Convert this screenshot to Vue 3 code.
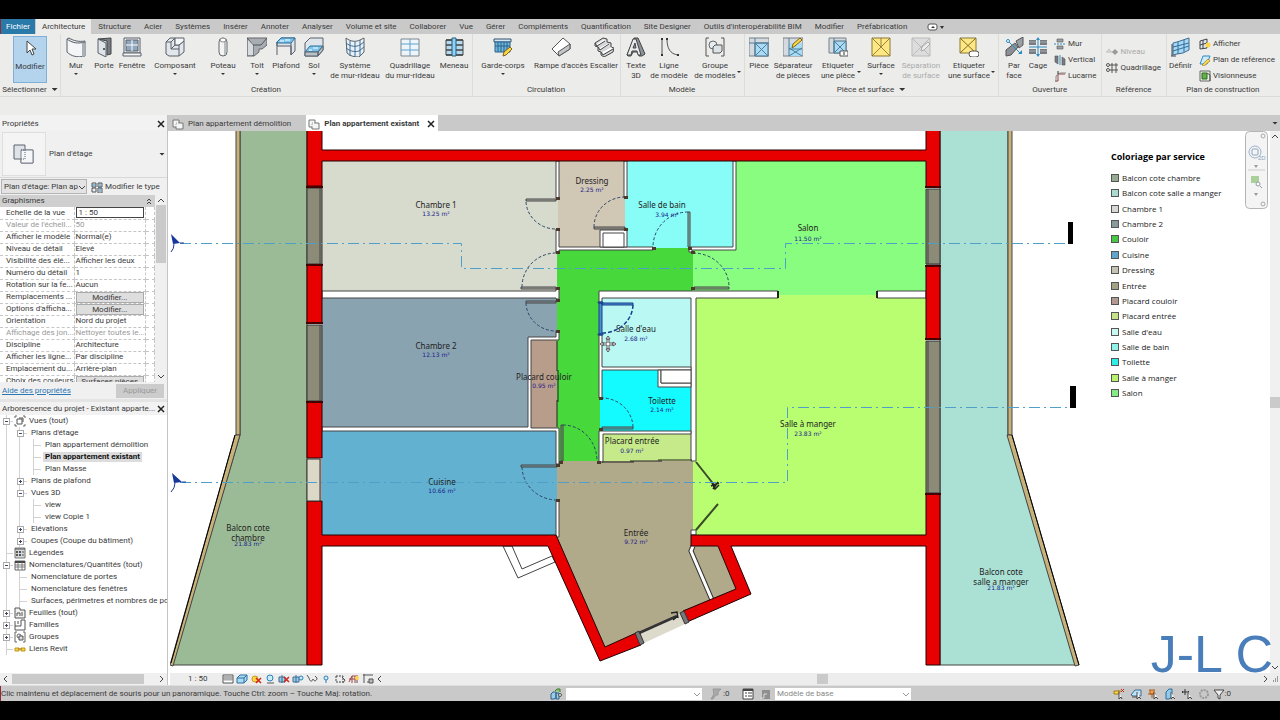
<script setup>
import { ref } from "vue";

// Glyphs of the ribbon, drawn on a 20x20 grid
const icons = {
  cursor:
    '<path d="M7 3v12l3-3 2 5 2-1-2-5h4z" fill="#fff" stroke="#444" stroke-width="1"/>',
  wall: '<path d="M1 2c5 4 11 5 18 3v14c-8 2-14 0-18-4z" fill="#f3f5f7" stroke="#59606a"/><path d="M1 2l2-1c5 3 10 4 16 3v1" fill="#d5d9dd" stroke="#59606a"/><path d="M16 6h3v13l-3 1z" fill="#a9b0b8"/>',
  door: '<path d="M4 2 17 1v16l-4 1V4z" fill="#777d86" stroke="#444"/><path d="M4 2l8 4v14l-8-4z" fill="#dfe4e8" stroke="#59606a"/><circle cx="10" cy="12" r="1" fill="#333"/>',
  window:
    '<path d="M2 1h16v15H2z" fill="#eef1f4" stroke="#59606a"/><path d="M4 3h12v11H4z" fill="#8fa6bd" stroke="#59606a"/><path d="M10 3v11M4 8h12" stroke="#fff"/><path d="M1 16h18v3H1z" fill="#f6f6f6" stroke="#59606a"/>',
  component:
    '<path d="M1 5 5 1h5v7h4l5-4v11l-5 4H4l-3-2z" fill="#e3e7eb" stroke="#59606a"/><path d="M10 1h9v3l-5 4h-4z" fill="#f6f7f8" stroke="#59606a"/><path d="M1 5h5v7h8v7M6 5l4-4M6 12l4-4M14 12V8" fill="none" stroke="#59606a"/>',
  column:
    '<rect x="6" y="1" width="8" height="18" rx="4" fill="#f4f4f4" stroke="#666"/><path d="M11 3v15h2V3z" fill="#b9bec4"/><ellipse cx="10" cy="3" rx="3" ry="2" fill="#fff" stroke="#888"/>',
  roof: '<path d="M0 1h20v7l-5 4h-3v3l-5 4H0z" fill="#a8adb3" stroke="#666"/><path d="M0 1l6 7h8l6-7M6 8v11" fill="none" stroke="#555"/><path d="M1 3l5 5v10H1z" fill="#d8dce0"/>',
  ceiling:
    '<path d="M1 5 5 1h14v13l-4 4V9H1z" fill="#dfe5ea" stroke="#59606a"/><path d="M1 5 5 1h14l-4 5H1z" fill="#7cc4ee" stroke="#2a6f9e"/><path d="M15 6v12M1 5v13" stroke="#59606a"/><path d="M4 4h4M9 3h5" stroke="#fff"/>',
  floor:
    '<path d="M1 15V6l5-5h13v12l-5 6H1z" fill="#dfe5ea" stroke="#59606a"/><path d="M1 15l5-6h13l-5 6z" fill="#7cc4ee" stroke="#2a6f9e"/><path d="M1 15h13v4H1zM14 15l5-6v4l-5 6z" fill="#b9c2ca" stroke="#59606a"/><path d="M5 13h3M9 11h5" stroke="#fff"/>',
  curtain:
    '<path d="M1 1c5 4 10 4 14 2l4-2v14l-5 5c-5 0-9-1-12-4z" fill="#e9f1f7" stroke="#59606a"/><path d="M1 6c5 4 10 4 14 2l4-3M1 11c5 4 10 4 13 3l5-4M5 4v15M10 5v15M15 3v16" fill="none" stroke="#3d6c93"/>',
  grid: '<path d="M1 2h18v17H1z" fill="#eef4f8" stroke="#7d8790"/><path d="M1 7h18M1 13h18M10 2v17" stroke="#5aa3cf"/>',
  mullion:
    '<path d="M2 3h17v15H2z" fill="#b5daef" stroke="#444"/><path d="M2 3h17M2 8h17M2 13h17M2 18h17" stroke="#444" stroke-width="1.500"/><path d="M8 1h4v18H8z" fill="#8fd0f5" stroke="#235c80"/>',
  railing:
    '<path d="M1 2h17v3H1z" fill="#cfe6f5" stroke="#35536d"/><path d="M2 5h15v10H2zM5 5v10M8 5v10M11 5v10M14 5v10M2 9h15" fill="#6eb5de" stroke="#2d6389"/><path d="M10 19l1-4 6-5 2 2-6 6z" fill="#ffd84a" stroke="#7d6512"/>',
  ramp: '<path d="M1 12 12 1l7 6v5L8 19z" fill="#fff" stroke="#555"/><path d="M8 19l-1-4L19 7v5z" fill="#c2c6ca" stroke="#555"/>',
  stairs:
    '<path d="M1 6l8-5 4 1v3l4 1v4l3 1-1 4-9 5-3-2v-3l-3-1v-4l-3-1z" fill="#d5d8db" stroke="#444"/><path d="M3 8l8-5M6 12l9-5M9 16l9-5" stroke="#fff" stroke-width="2"/><path d="M1 6l2 3 8-5M4 10l2 3 9-6M7 15l2 3 10-6" stroke="#444" fill="none"/>',
  text3d:
    '<path d="M1 18 8 1h4l7 16-3 2h-3l-1-4H7l-2 4H2z" fill="#8c9299" stroke="#444"/><path d="M1 18 7 2h3l5 16h-3l-1-4H6l-1 4zM7 11h3L9 6z" fill="#e8eaec" stroke="#444" fill-rule="evenodd"/>',
  line: '<path d="M3 2v16M8 2c0 9 3 15 11 16" fill="none" stroke="#555"/><path d="M2 1h2v2H2zM2 17h2v2H2zM7 1h2v2H7zM18 17h2v2h-2z" fill="#333"/>',
  group:
    '<path d="M4 1H1v18h3M16 1h3v18h-3" fill="none" stroke="#555"/><circle cx="8" cy="8" r="4" fill="#e8edf1" stroke="#666"/><path d="M8 10l2-2h7v6l-2 2H8z" fill="#dce3e9" stroke="#555"/>',
  room: '<path d="M0 1h20v18H0z" fill="#d6dadf" stroke="#75808a"/><path d="M6 6h13v13H6z" fill="#a9dcf4" stroke="#4f6f85"/><path d="M6 6l13 13M19 6 6 19M6 1v18M0 6h20" stroke="#4d7f9d"/>',
  roomsep:
    '<path d="M0 1h20v18H0z" fill="#d6dadf" stroke="#75808a"/><path d="M6 6h13v13H6z" fill="#a9dcf4"/><path d="M6 11l13 8M19 11 6 19M6 1v18M6 12h13" stroke="#4d7f9d"/><path d="M9 11l1-4 7-6 2 2-7 6z" fill="#ffd84a" stroke="#7d6512"/>',
  roomtag:
    '<path d="M1 1h17v15H1z" fill="#d6dadf" stroke="#75808a"/><path d="M6 4h12v12H6z" fill="#a9dcf4" stroke="#4f6f85"/><path d="M6 4l12 12M18 4 6 16M6 1v15" stroke="#4d7f9d"/><path d="M12 14h8v5h-8z" fill="#fff" stroke="#555"/><path d="M16 15v3" stroke="#333"/>',
  area: '<path d="M1 1h18v18H1z" fill="#ffe884" stroke="#8b7836"/><path d="M1 1l18 18M19 1 1 19M10 1v9" stroke="#7d6b2d" stroke-width=".8"/>',
  areasep:
    '<path d="M1 1h18v18H1z" fill="#ddd" stroke="#bbb"/><path d="M1 1l18 18M19 1 1 19" stroke="#bbb"/><path d="M10 14l1-4 6-5 2 2-6 6z" fill="#eee" stroke="#aaa"/>',
  areatag:
    '<path d="M1 1h16v15H1z" fill="#ffe884" stroke="#8b7836"/><path d="M1 1l16 15M17 1 1 16" stroke="#7d6b2d"/><rect x="10" y="14" width="10" height="6" rx="3" fill="#fff" stroke="#555"/>',
  byface:
    '<path d="M2 19v-6l9-7 3 4-7 8z" fill="#8b9096" stroke="#555"/><path d="M12 4l7-4v8l-4 3z" fill="#9aa0a6" stroke="#555"/><path d="M4 4l12 12" stroke="#2f8bc4"/><circle cx="4" cy="4" r="1.500" fill="#fff" stroke="#2f8bc4"/><path d="M14 17h4v-4z" fill="#2f8bc4"/>',
  shaft:
    '<path d="M1 3h7v5H1zM12 3h7v5h-7zM1 12h7v5H1zM12 12h7v5h-7z" fill="#777c82"/><path d="M1 5h7M1 14h7M12 5h7M12 14h7" stroke="#aaa"/><path d="M10 2v17M1 10h18" stroke="#2f8bc4"/><path d="M8 3l2-3 2 3zM8 17l2 3 2-3z" fill="#2f8bc4"/>',
  workplane:
    '<path d="M3 6l4-1 6-2 6-2v12l-6 3-6 1-4 1z" fill="#a9d8f4" stroke="#3d6c93"/><path d="M3 10l16-4M3 14l16-5M8 5v12M14 3v12" fill="none" stroke="#2f6f9c"/><path d="M1 19h5M2 7v12" stroke="#444"/>',
};

// 12x12 glyphs, shared by the ribbon stacks, the browser tree and the bottom bars
const smallIcons = {
  wallopen:
    '<path d="M3 1h6v3H3zM3 8h6v3H3z" fill="#9aa0a6" stroke="#555" stroke-width=".6"/><path d="M0 6h12" stroke="#2f8bc4" stroke-dasharray="2 1"/>',
  vertical:
    '<path d="M1 2h3v8L1 8zM8 3l3 2v6H8z" fill="#777c82" stroke="#555" stroke-width=".6"/><path d="M6 1v10" stroke="#2f8bc4"/>',
  dormer: '<path d="M1 11h3V4h7" fill="none" stroke="#a04545"/><path d="M2 12V6l4-3h6" fill="none" stroke="#888"/><path d="M4 1v3" stroke="#333"/>',
  level: '<path d="M0 6h12" stroke="#bbb"/><path d="M6 6l3-3 3 3-3 3z" fill="#999"/><path d="M1 6l2-3 2 3" fill="none" stroke="#bbb"/>',
  axes: '<path d="M4 3h8M4 8h8M6 1v10M10 1v10" stroke="#555"/><circle cx="2" cy="3" r="1.500" fill="none" stroke="#555"/><circle cx="2" cy="8" r="1.500" fill="none" stroke="#555"/>',
  show: '<path d="M1 3l7-2v9l-7 1z" fill="#dfe7ee" stroke="#444"/><path d="M1 7l7-2M4 2v9" stroke="#444"/><circle cx="9" cy="7" r="2.500" fill="#ffd84a"/>',
  refplane:
    '<path d="M1 10l3-8h7L8 10z" fill="#cde9fa" stroke="#2f8bc4"/><path d="M3 11l6-6 2 2-6 5z" fill="#ffd84a" stroke="#8d6d1a" stroke-width=".6"/>',
  viewer:
    '<path d="M1 1h10v10H1z" fill="#e7f2e2" stroke="#666"/><path d="M3 3h5v6H3z" fill="#64b04e" stroke="#2d6b1d"/><path d="M8 3l3 2v6" fill="none" stroke="#555"/>',
  views: '<path d="M3 1H1v2M9 1h2v2M1 9v2h2M11 9v2H9" fill="none" stroke="#666"/><path d="M3 4h5v5H3zM5 3h4v4" fill="none" stroke="#555"/>',
  legend: '<path d="M1 1h10v10H1z" fill="#d5d8db" stroke="#777"/><path d="M1 2h10" stroke="#555"/><path d="M3 4v6M6 4v6" stroke="#555" stroke-width="2" stroke-dasharray="2 1"/><path d="M8 5h2M8 8h2" stroke="#555"/>',
  schedule: '<path d="M1 2h10v9H1z" fill="#fff" stroke="#666"/><path d="M1 3h10" stroke="#444" stroke-width="2"/><path d="M1 6h10M1 8h10M4 3v8M8 3v8" stroke="#666" stroke-width=".8"/>',
  sheets: '<path d="M1 1h5v2h5v8H1z" fill="#f2f2f2" stroke="#555"/><path d="M3 9V6h3v3M8 5v4" fill="none" stroke="#555"/>',
  families: '<path d="M1 2v9h10V1H7v6H1M4 2v3" fill="none" stroke="#555"/>',
  groups: '<path d="M3 1H1v10h2M9 1h2v10H9" fill="none" stroke="#666"/><circle cx="5" cy="5" r="2" fill="none" stroke="#666"/><path d="M5 5h4v4H5z" fill="#ddd" stroke="#555"/>',
  link: '<path d="M1 5h4v3H1zM7 5h4v3H7z" fill="#f5d34b" stroke="#c2951a"/><path d="M4 6h4" stroke="#a27b12"/>',
  plan: '<path d="M1 2h6v3h4v6H4V9H1z" fill="#f4f5f6" stroke="#777"/><path d="M4 9V5h3" fill="none" stroke="#999" stroke-dasharray="1 1"/>',
  edittype: '<path d="M1 2h4v4H1zM7 2h4v4H7zM1 7h4v4H1zM7 7h4v5H7z" fill="#e7eef4" stroke="#555"/><path d="M1 4h4M9 2v9" stroke="#3d86b8"/>',
  detail: '<path d="M1 2h10v8H1z" fill="#fff" stroke="#555"/><path d="M1 4h10M1 6h10M3 3v5M5 3v5M7 3v5M9 3v5" stroke="#666" stroke-width=".6"/>',
  visual: '<path d="M1 5l3-3h7v5L8 10H1z" fill="#a9dcf4" stroke="#2a6f9e"/><path d="M1 5h7l3-3M8 5v5" fill="none" stroke="#2a6f9e"/>',
  sun: '<circle cx="5" cy="6" r="3" fill="#ffd84a" stroke="#c99a1b"/><path d="M6 5l5 5M11 5l-5 5" stroke="#d3261b" stroke-width="1.500"/>',
  shadow: '<circle cx="6" cy="5" r="3" fill="#c9ecfb" stroke="#2a7fb4"/><path d="M3 10h7" stroke="#555"/>',
  cropoff: '<path d="M1 4h6v5H1zM4 2v8" fill="#9ccbe8" stroke="#3d6c93"/><path d="M6 4l5 5M11 4l-5 5" stroke="#d3261b" stroke-width="1.500"/>',
  crop: '<path d="M1 4h6v5H1zM4 2v8" fill="#9ccbe8" stroke="#3d6c93"/><circle cx="9" cy="5" r="2" fill="#c9ecfb" stroke="#2a7fb4"/>',
  hide: '<path d="M1 2l2 3c1 4 3 4 4 1 1 3 4 2 4-1L9 3" fill="none" stroke="#555"/>',
  bulb: '<circle cx="6" cy="5" r="2" fill="#d5effc" stroke="#2a7fb4"/><path d="M6 7v3" stroke="#2a7fb4"/>',
  temp: '<path d="M2 3h7v6H2z" fill="none" stroke="#444" stroke-dasharray="2 1"/><path d="M8 4l3 3-2 3" fill="none" stroke="#555"/>',
  analytic: '<path d="M1 9l3-6h6M1 6h9M4 3v7M7 3v7" fill="none" stroke="#a04545"/><circle cx="9" cy="5" r="2" fill="#ffd84a"/><path d="M9 7v3" stroke="#555"/>',
  constraint: '<path d="M1 2h10M2 1v9M5 9h3" stroke="#555"/><path d="M7 6h4v4H7z" fill="#bbb" stroke="#555"/>',
  workset: '<path d="M1 6l2-2h3v6l-2 1H1zM6 5h3v6H6z" fill="#9ccbe8" stroke="#2d6389"/><path d="M5 3l2-2h3v3" fill="#7fc46e" stroke="#3c7b2d"/><circle cx="10" cy="7" r="1.500" fill="#eee" stroke="#555"/>',
  requests: '<path d="M3 1h8L8 4v3H6l-3 4H1l3-5z" fill="#aaa" stroke="#999"/>',
  options: '<path d="M1 1h10v10H1z" fill="#fff" stroke="#444"/><path d="M1 2h10" stroke="#444" stroke-width="2"/><path d="M3 5h2M3 8h2M6 5h4M6 8h4" stroke="#444"/>',
  mainmodel: '<path d="M3 2h8v9H3z" fill="#8f8f8f"/><path d="M1 10h4V6h3" fill="none" stroke="#ddd"/>',
  sellink: '<path d="M1 3h5v3H1zM5 3h3" fill="#ffd84a" stroke="#a27b12"/><path d="M8 1l3 3M11 1 8 4" stroke="#d3261b"/><path d="M6 4v7l2-2 1 2" fill="#fff" stroke="#444"/>',
  selunder: '<path d="M1 7l4-5h6v6H3z" fill="#bfe3f7" stroke="#3d6c93"/><path d="M2 9h8" stroke="#555"/><path d="M7 4v7l2-2 2 2" fill="#fff" stroke="#444"/>',
  selpin: '<path d="M2 2h6M3 2v4h4V2M1 6h8M5 6v4" fill="#f2a65a" stroke="#b35c17"/><path d="M7 4v7l2-2 2 2" fill="#fff" stroke="#444"/>',
  selface: '<path d="M2 4l3-3h3v8l-3 2H2z" fill="#8fc9ec" stroke="#2a6f9e"/><path d="M7 4v7l2-2 2 2" fill="#fff" stroke="#444"/>',
  drag: '<path d="M4 1v6M1 4h7M2 3 1 4l1 1M7 3l1 1" fill="none" stroke="#333"/><path d="M7 5v6l2-2 2 2" fill="#fff" stroke="#444"/>',
  process: '<circle cx="6" cy="6" r="4" fill="none" stroke="#999" stroke-width="2" stroke-dasharray="2 1"/>',
  filter: '<path d="M1 2h10L7 7v4l-2-1V7z" fill="#eee" stroke="#444"/>',
};

const menuTabs = [
  "Structure",
  "Acier",
  "Systèmes",
  "Insérer",
  "Annoter",
  "Analyser",
  "Volume et site",
  "Collaborer",
  "Vue",
  "Gérer",
  "Compléments",
  "Quantification",
  "Site Designer",
  "Outils d'interopérabilité BIM",
  "Modifier",
  "Préfabrication",
];

const panels = [
  {
    title: "Création",
    tools: [
      { icon: "wall", lines: ["Mur"], width: 28, menu: true },
      { icon: "door", lines: ["Porte"], width: 28 },
      { icon: "window", lines: ["Fenêtre"], width: 28 },
      { icon: "component", lines: ["Composant"], width: 58, menu: true },
      { icon: "column", lines: ["Poteau"], width: 38, menu: true },
      { icon: "roof", lines: ["Toit"], width: 30, menu: true },
      { icon: "ceiling", lines: ["Plafond"], width: 28 },
      { icon: "floor", lines: ["Sol"], width: 28, menu: true },
      { icon: "curtain", lines: ["Système", "de mur-rideau"], width: 54 },
      { icon: "grid", lines: ["Quadrillage", "du mur-rideau"], width: 56 },
      { icon: "mullion", lines: ["Meneau"], width: 32 },
    ],
  },
  {
    title: "Circulation",
    tools: [
      { icon: "railing", lines: ["Garde-corps"], width: 58, menu: true },
      { icon: "ramp", lines: ["Rampe d'accès"], width: 58 },
      { icon: "stairs", lines: ["Escalier"], width: 28 },
    ],
  },
  {
    title: "Modèle",
    tools: [
      { icon: "text3d", lines: ["Texte", "3D"], width: 28 },
      { icon: "line", lines: ["Ligne", "de modèle"], width: 38 },
      { icon: "group", lines: ["Groupe", "de modèles"], width: 54, aside: true },
    ],
  },
  {
    title: "Pièce et surface",
    expand: true,
    tools: [
      { icon: "room", lines: ["Pièce"], width: 26 },
      { icon: "roomsep", lines: ["Séparateur", "de pièces"], width: 42 },
      { icon: "roomtag", lines: ["Etiqueter", "une pièce"], width: 48, aside: true },
      { icon: "area", lines: ["Surface"], width: 38, menu: true },
      { icon: "areasep", lines: ["Séparation", "de surface"], width: 42, off: true },
      { icon: "areatag", lines: ["Etiqueter", "une surface"], width: 54, aside: true },
    ],
  },
  {
    title: "Ouverture",
    tools: [
      { icon: "byface", lines: ["Par", "face"], width: 28 },
      { icon: "shaft", lines: ["Cage"], width: 20 },
    ],
    stack: [
      { icon: "wallopen", label: "Mur" },
      { icon: "vertical", label: "Vertical" },
      { icon: "dormer", label: "Lucarne" },
    ],
  },
  {
    title: "Référence",
    tools: [],
    stack: [
      { icon: "level", label: "Niveau", off: true },
      { icon: "axes", label: "Quadrillage" },
    ],
  },
  {
    title: "Plan de construction",
    tools: [{ icon: "workplane", lines: ["Définir"], width: 25 }],
    stack: [
      { icon: "show", label: "Afficher" },
      { icon: "refplane", label: "Plan de référence" },
      { icon: "viewer", label: "Visionneuse" },
    ],
  },
];

const scale = ref("1 : 50");

const properties = [
  { name: "Echelle de la vue", kind: "input" },
  { name: "Valeur de l'échell...", value: "50", off: true },
  { name: "Afficher le modèle", value: "Normal(e)" },
  { name: "Niveau de détail", value: "Elevé" },
  { name: "Visibilité des élé...", value: "Afficher les deux" },
  { name: "Numéro du détail", value: "1" },
  { name: "Rotation sur la fe...", value: "Aucun" },
  { name: "Remplacements ...", value: "Modifier...", kind: "button" },
  { name: "Options d'afficha...", value: "Modifier...", kind: "button" },
  { name: "Orientation", value: "Nord du projet" },
  { name: "Affichage des jon...", value: "Nettoyer toutes le...", off: true },
  { name: "Discipline", value: "Architecture" },
  { name: "Afficher les ligne...", value: "Par discipline" },
  { name: "Emplacement du...", value: "Arrière-plan" },
  { name: "Choix des couleurs", value: "Surfaces pièces", kind: "button" },
];

// cells: plus/minus = expander, tick = branch, line = guide only
const tree = [
  { cells: ["minus"], icon: "views", label: "Vues (tout)" },
  { cells: ["line", "minus"], label: "Plans d'étage" },
  { cells: ["line", "line", "tick"], label: "Plan appartement démolition" },
  { cells: ["line", "line", "tick"], label: "Plan appartement existant", active: true },
  { cells: ["line", "line", "tick"], label: "Plan Masse" },
  { cells: ["line", "plus"], label: "Plans de plafond" },
  { cells: ["line", "minus"], label: "Vues 3D" },
  { cells: ["line", "line", "tick"], label: "view" },
  { cells: ["line", "line", "tick"], label: "view Copie 1" },
  { cells: ["line", "plus"], label: "Elévations" },
  { cells: ["line", "plus"], label: "Coupes (Coupe du bâtiment)" },
  { cells: ["tick"], icon: "legend", label: "Légendes" },
  { cells: ["minus"], icon: "schedule", label: "Nomenclatures/Quantités (tout)" },
  { cells: ["line", "tick"], label: "Nomenclature de portes" },
  { cells: ["line", "tick"], label: "Nomenclature des fenêtres" },
  { cells: ["line", "tick"], label: "Surfaces, périmetres et nombres de por" },
  { cells: ["plus"], icon: "sheets", label: "Feuilles (tout)" },
  { cells: ["plus"], icon: "families", label: "Familles" },
  { cells: ["plus"], icon: "groups", label: "Groupes" },
  { cells: ["tick"], icon: "link", label: "Liens Revit" },
];

const rooms = [
  { x: 436, y: 208, lines: ["Chambre 1"], area: "13.25 m²" },
  { x: 592, y: 184, lines: ["Dressing"], area: "2.25 m²" },
  { x: 662, y: 208, lines: ["Salle de bain"], area: "3.94 m²", ax: 667, ay: 217 },
  { x: 808, y: 231, lines: ["Salon"], area: "11.50 m²", ay: 241 },
  { x: 436, y: 349, lines: ["Chambre 2"], area: "12.13 m²" },
  { x: 544, y: 380, lines: ["Placard couloir"], area: "0.95 m²" },
  { x: 636, y: 332, lines: ["Salle d'eau"], area: "2.68 m²", ay: 341 },
  { x: 662, y: 404, lines: ["Toilette"], area: "2.14 m²" },
  { x: 808, y: 427, lines: ["Salle à manger"], area: "23.83 m²", ay: 436 },
  { x: 632, y: 444, lines: ["Placard entrée"], area: "0.97 m²", ay: 453 },
  { x: 636, y: 536, lines: ["Entrée"], area: "9.72 m²" },
  { x: 442, y: 485, lines: ["Cuisine"], area: "10.66 m²" },
  { x: 248, y: 531, lines: ["Balcon cote", "chambre"], area: "21.83 m²", ay: 546 },
  { x: 1001, y: 575, lines: ["Balcon cote", "salle a manger"], area: "21.83 m²", ay: 590 },
];

const legend = [
  ["Balcon cote chambre", "#97ab93"],
  ["Balcon cote salle a manger", "#a9dcd0"],
  ["Chambre 1", "#d6d8d3"],
  ["Chambre 2", "#87999c"],
  ["Couloir", "#47c845"],
  ["Cuisine", "#62a5cc"],
  ["Dressing", "#c6c3b2"],
  ["Entrée", "#a5a187"],
  ["Placard couloir", "#b39a90"],
  ["Placard entrée", "#c6e186"],
  ["Salle d'eau", "#c9f6ef"],
  ["Salle de bain", "#8ff3ea"],
  ["Toilette", "#2eeee8"],
  ["Salle à manger", "#b9f26f"],
  ["Salon", "#84ea85"],
].map(([label, color], i) => ({
  label,
  color,
  y: 174 + Math.round((i * 215) / 14),
}));

// door leaves with their swing
const doors = [
  { leaf: "M526 199h30v2h-30z", arc: "M526 202A30 29 0 0 0 556 229" },
  { leaf: "M521 287h35v2h-35z", arc: "M522 287A34 34 0 0 1 556 253" },
  { leaf: "M526 301h30v2h-30z", arc: "M526 303A30 29 0 0 0 556 331" },
  { leaf: "M594 227h31v2h-31z", arc: "M594 227A31 30 0 0 1 626 197" },
  { leaf: "M688 212h2v35h-2z", arc: "M688 212A35 35 0 0 0 653 247" },
  { leaf: "M694 287h35v2h-35z", arc: "M693 253A36 34 0 0 1 729 287" },
  { leaf: "M602 427h31v2h-31z", arc: "M633 427A31 30 0 0 0 602 398" },
  { leaf: "M561 425h2v36h-2z", arc: "M563 425A34 36 0 0 1 597 461" },
  { leaf: "M521 465h36v2h-36z", arc: "M522 467A35 34 0 0 0 557 500" },
];

const jambs = [
  [556, 197], [556, 228], [556, 251], [556, 287], [556, 299], [556, 330],
  [624, 196], [624, 228], [652, 247], [688, 247], [691, 251], [691, 287],
  [599, 397], [599, 428], [559, 461], [597, 461], [556, 464], [556, 499],
];

const viewIcons = [
  "detail", "visual", "sun", "shadow", "cropoff", "crop",
  "hide", "bulb", "temp", "analytic", "constraint",
];
const selectionIcons = [
  "sellink", "selunder", "selpin", "selface", "drag", "process",
];
</script>

<template>
  <div class="app">
    <nav class="menu">
      <button class="file">Fichier</button>
      <button class="active">Architecture</button>
      <button v-for="tab in menuTabs" :key="tab">{{ tab }}</button>
      <button class="toggle" aria-label="Réduire le ruban">
        <svg width="18" height="8" viewBox="0 0 18 8">
          <rect x="1" y="1" width="9" height="6" rx="2" fill="#fff" stroke="#555" />
          <path d="M4 5l2-2 2 2zM13 3h4l-2 3z" fill="#333" />
        </svg>
      </button>
    </nav>

    <header class="ribbon">
      <section class="panel select">
        <div class="tools">
          <button class="tool modify">
            <svg class="big" viewBox="0 0 20 20" v-html="icons.cursor"></svg>
            <span>Modifier</span>
          </button>
        </div>
        <h2>Sélectionner <i class="caret wide"></i></h2>
      </section>
      <section v-for="panel in panels" :key="panel.title" class="panel">
        <div class="tools">
          <button
            v-for="tool in panel.tools"
            :key="tool.icon"
            class="tool"
            :class="{ off: tool.off }"
            :style="{ width: tool.width + 'px' }"
            :disabled="tool.off"
          >
            <svg class="big" viewBox="0 0 20 20" v-html="icons[tool.icon]"></svg>
            <span v-for="line in tool.lines" :key="line">{{ line }}</span>
            <i v-if="tool.menu" class="caret"></i>
            <i v-if="tool.aside" class="caret beside"></i>
          </button>
          <div v-if="panel.stack" class="stack">
            <button
              v-for="item in panel.stack"
              :key="item.label"
              :class="{ off: item.off }"
              :disabled="item.off"
            >
              <svg class="small" viewBox="0 0 12 12" v-html="smallIcons[item.icon]"></svg>
              {{ item.label }}
            </button>
          </div>
        </div>
        <h2>{{ panel.title }} <i v-if="panel.expand" class="caret wide"></i></h2>
      </section>
    </header>
    <div class="options"></div>

    <main class="workspace">
      <aside class="sidebar">
        <section class="properties">
          <div class="heading">
            <h3>Propriétés</h3>
            <button class="close" aria-label="Fermer">
              <svg viewBox="0 0 8 8"><path d="M1 1l6 6M7 1 1 7" /></svg>
            </button>
          </div>
          <button class="type">
            <span class="thumb">
              <svg viewBox="0 0 24 24">
                <path d="M2 3h11v5h8v13H9v-4H2z" fill="#dfe2e8" stroke="#5b6370" />
                <path d="M9 17V8h12v13H9z" fill="#f5f6f8" stroke="#7b8390" />
                <path d="M9 8h4v9H9" fill="none" stroke="#5b6370" stroke-dasharray="1 1" />
              </svg>
            </span>
            <span>Plan d'étage</span>
            <i class="caret wide"></i>
          </button>
          <div class="instance">
            <div class="combo">
              <select aria-label="Vue">
                <option>Plan d'étage: Plan ap</option>
              </select>
              <svg viewBox="0 0 8 8"><path d="M1 3l3 3 3-3" /></svg>
            </div>
            <button>
              <svg class="small" viewBox="0 0 12 12" v-html="smallIcons.edittype"></svg>
              Modifier le type
            </button>
          </div>
          <div class="parameters">
            <div class="scrolled">
              <div class="group">
                <span>Graphismes</span>
                <svg viewBox="0 0 8 8"><path d="M2 4l2-2 2 2M2 7l2-2 2 2" /></svg>
              </div>
              <table>
                <tbody>
                  <tr v-for="row in properties" :key="row.name" :class="{ off: row.off }">
                    <th scope="row">{{ row.name }}</th>
                    <td>
                      <input v-if="row.kind === 'input'" v-model="scale" :aria-label="row.name" />
                      <button v-else-if="row.kind === 'button'">{{ row.value }}</button>
                      <template v-else>{{ row.value }}</template>
                    </td>
                    <td class="link"></td>
                  </tr>
                </tbody>
              </table>
            </div>
            <div class="vscroll">
              <svg viewBox="0 0 8 8"><path d="M1 5l3-3 3 3" /></svg>
              <div class="thumb-v"></div>
              <svg viewBox="0 0 8 8"><path d="M1 3l3 3 3-3" /></svg>
            </div>
          </div>
          <div class="help">
            <a href="#">Aide des propriétés</a>
            <button disabled>Appliquer</button>
          </div>
        </section>

        <section class="browser">
          <div class="heading">
            <h3>Arborescence du projet - Existant apparte...</h3>
            <button class="close" aria-label="Fermer">
              <svg viewBox="0 0 8 8"><path d="M1 1l6 6M7 1 1 7" /></svg>
            </button>
          </div>
          <ul>
            <li v-for="node in tree" :key="node.label">
              <i v-for="(cell, i) in node.cells" :key="i" class="cell" :class="cell">
                <svg v-if="cell === 'plus' || cell === 'minus'" viewBox="0 0 7 7">
                  <rect x="0.5" y="0.5" width="6" height="6" fill="#fff" stroke="#aaa" />
                  <path :d="cell === 'plus' ? 'M2 3.500h3M3.500 2v3' : 'M2 3.500h3'" stroke="#446" />
                </svg>
              </i>
              <svg
                v-if="node.icon"
                class="small"
                viewBox="0 0 12 12"
                v-html="smallIcons[node.icon]"
              ></svg>
              <span :class="{ active: node.active }">{{ node.label }}</span>
            </li>
          </ul>
          <div class="hscroll">
            <svg viewBox="0 0 8 8"><path d="M5 1 2 4l3 3" /></svg>
            <div class="thumb-h"></div>
            <svg viewBox="0 0 8 8"><path d="M3 1l3 3-3 3" /></svg>
          </div>
        </section>
      </aside>

      <section class="view">
        <div class="documents">
          <button>
            <svg class="small" viewBox="0 0 12 12" v-html="smallIcons.plan"></svg>
            Plan appartement démolition
          </button>
          <button class="current">
            <svg class="small" viewBox="0 0 12 12" v-html="smallIcons.plan"></svg>
            Plan appartement existant
            <svg class="x" viewBox="0 0 8 8"><path d="M1 1l6 6M7 1 1 7" /></svg>
          </button>
          <i class="caret wide"></i>
        </div>

        <div class="canvas">
          <svg class="drawing" viewBox="170 131 1100 541" preserveAspectRatio="xMinYMin meet">
            <!-- balconies -->
            <g stroke="#444" stroke-width="1">
              <path d="M240 130h67v535H172l68-230z" fill="#9bbb96" />
              <path d="M236 130h4v305h-4z" fill="#c8b27a" />
              <path d="M235 435h5L173 666l-3-1z" fill="#c8b27a" />
              <path d="M940 130h68v305l68 230H940z" fill="#aae1d4" />
              <path d="M1008 130h4v305h-4z" fill="#c8b27a" />
              <path d="M1007 435h5l67 230-4 1z" fill="#c8b27a" />
            </g>
            <path d="M235 435l-64 228M1012 435l67 230" stroke="#000" stroke-width="1" />

            <!-- room fills -->
            <g>
              <path d="M322 161h236v131H322z" fill="#d6dbcd" />
              <path d="M322 297h236v132H322z" fill="#8aa3b1" />
              <path d="M322 430h236v106H322z" fill="#62b1d0" />
              <path d="M558 161h67v87h-67z" fill="#d0c7b5" />
              <path d="M625 161h110v88H625z" fill="#88fdf7" />
              <path d="M735 161h191v134H693v-46h42z" fill="#88fd7f" />
              <path d="M693 295h233v240H693z" fill="#b9fd70" />
              <path d="M557 248h136v44h-93v169h-43z" fill="#47d83b" />
              <path d="M600 297h92v71h-92z" fill="#baf9f3" />
              <path d="M600 369h92v63h-92z" fill="#13fbff" />
              <path d="M602 434h90v27h-90z" fill="#c6ea8a" />
              <path d="M531 340h26v88h-26z" fill="#b99d8b" />
              <path d="M557 461h136v85h25l18 43-131 58-48-109z" fill="#b0a98a" />
              <path d="M636 633l44-20 5 11-43 20z" fill="#dcdacb" />
            </g>

            <!-- partitions -->
            <g fill="#fff" stroke="#444" stroke-width="1">
              <path d="M556 161h3v37h-3zM556 229h3v18h94v3h-94v3h-3z" />
              <path d="M624 161h3v37h-3zM600 247v-17h24v-1h3v18z" />
              <path d="M603 233h21v14h-21z" />
              <path d="M733 161h3v89h-44v2h-3v-5h44z" />
              <path d="M322 291h234v-2h3v10h-3v-1H322z" />
              <path d="M599 302v-11h179v7h-82v163h-5V298h-89v4z" />
              <path d="M877 291h49v7h-49z" />
              <path d="M556 331h3v9h-28v88h28v36h-3v-33H322v-4h206v-90h28z" />
              <path d="M556 501h3v36h-3z" />
              <path d="M599 335h3v32h89v3h-89v28h-3z" />
              <path d="M658 370v17h33v-4h-30v-13z" />
              <path d="M661 370h30v13h-30z" />
              <path d="M599 431h92v3h-88v28h-4z" />
              <path d="M691 530h5v5h-5z" />
              <path d="M503 546l15 32 37-16-3-6-30 13-10-23z" />
            </g>
            <path d="M778 291v7M877 291v7" stroke="#222" stroke-width="2" />
            <path d="M557 341v30M558 370v32M557 400v27" stroke="#222" stroke-width="1" />
            <path d="M602 462h32M630 461h32M658 460h34" stroke="#222" stroke-width="1" />
            <path d="M693 546l-2 5 21 49" fill="none" stroke="#333" stroke-width="5" />
            <path d="M693 546l-2 5 21 49" fill="none" stroke="#fff" stroke-width="3" />

            <!-- load-bearing walls -->
            <g fill="#e80000" stroke="#200" stroke-width="1">
              <path d="M307 130h15v20h604v-20h14v57h-14v-26H322v25h-15z" />
              <path d="M307 265h15v58h-15zM307 402h15v56h-15z" />
              <path d="M307 501h15v34h234l49 112 31-14 5 12-41 16-52-115H322v119h-15z" />
              <path d="M926 265h14v74h-14z" />
              <path d="M926 494h14v171h-14V546H731l20 48-64 28-4-11 53-22-18-43h-27v-11h235z" />
            </g>
            <g fill="#8b8b78" stroke="#333" stroke-width="1">
              <path d="M307 188h15v76h-15zM307 325h15v76h-15z" />
              <path d="M926 189h14v75h-14zM926 341h14v152h-14z" />
              <path d="M307 459h13v42h-13z" fill="#dcd8c8" />
              <path d="M635 633l4-2 5 12-4 2zM680 613l4-2 5 11-4 2z" fill="#777" />
            </g>
            <path
              d="M320 188v76M320 325v76M321 459v42M928 189v75M928 341v152"
              stroke="#444"
              stroke-width="1"
            />
            <path
              d="M306 187h17M306 265h17M306 323h17M306 402h17M925 187h16M925 266h16M925 339h16M925 494h16"
              stroke="#400"
              stroke-width="2"
            />

            <!-- doors -->
            <g v-for="door in doors" :key="door.leaf">
              <path :d="door.leaf" fill="#888" fill-opacity="0.500" stroke="#444" stroke-width="1" />
              <path :d="door.arc" fill="none" stroke="#2c4468" stroke-width="1" stroke-dasharray="3 2" />
            </g>
            <rect
              v-for="[x, y] in jambs"
              :key="x + '-' + y"
              :x="x"
              :y="y"
              width="4"
              height="3"
              fill="#4a3a2c"
            />
            <g stroke="#123f8c">
              <path d="M602 303h31v2h-31zM599 303h3v31h-3z" fill="#4d8fd0" />
              <path d="M633 305A31 29 0 0 1 602 333" fill="none" stroke-width="1.500" stroke-dasharray="4 2" />
              <path d="M598 302h5v1h-5zM598 334h5v1h-5z" />
            </g>
            <g fill="none" stroke="#3b4a2a">
              <path d="M696 462l19 24M718 504l-22 26" stroke-width="2" />
              <path d="M711 486l8-3M713 489l5-7M712 483l3 6 4-4" stroke="#222" stroke-width="1.500" />
              <path d="M639 633l38-17" stroke="#333" stroke-width="3" />
              <path d="M671 613l6-1 1 6M673 620l5-4" stroke="#222" stroke-width="1.500" />
            </g>

            <!-- section lines -->
            <g fill="none" stroke="#4f9fc8" stroke-width="1" stroke-dasharray="11 4 2 4">
              <path d="M180 243.500H461.500V268.500H785.500V243.500H1068" />
              <path d="M180 482.500H787.500V407.500H1070" />
            </g>
            <path d="M1068 222h5v22h-5zM1070 386h6v22h-6z" fill="#000" />
            <g fill="#16389c">
              <path d="M171 234l9 9-7 1zM172 473l10 9-8 1z" />
              <path
                d="M174 244q0 5-3 8M175 483q0 5-4 9M180 243h4M182 482h4"
                fill="none"
                stroke="#16389c"
              />
            </g>

            <g v-for="room in rooms" :key="room.lines[0] + room.x" text-anchor="middle">
              <text
                v-for="(line, i) in room.lines"
                :key="line"
                class="room"
                :x="room.x"
                :y="room.y + i * 10"
              >
                {{ line }}
              </text>
              <text class="area" :x="room.ax || room.x" :y="room.ay || room.y + 8">
                {{ room.area }}
              </text>
            </g>

            <text class="title" x="1111" y="160">Coloriage par service</text>
            <g v-for="entry in legend" :key="entry.label">
              <rect x="1111.500" :y="entry.y + 0.5" width="7" height="7" :fill="entry.color" stroke="#555" />
              <text class="entry" x="1122" :y="entry.y + 7">{{ entry.label }}</text>
            </g>

            <!-- pan cursor -->
            <g fill="#fff" stroke="#555" stroke-width="1">
              <path d="M607 339h2v4h4v2h-4v4h-2v-4h-4v-2h4z" />
              <path d="M606 339l2-3 2 3zM606 349l2 3 2-3zM603 342l-3 2 3 2zM613 342l3 2-3 2z" />
            </g>
          </svg>

          <div class="navigation">
            <svg viewBox="0 0 24 78">
              <rect x="0.500" y="0.500" width="22" height="77" rx="4" fill="#f4f4f4" stroke="#b5b5b5" />
              <g fill="none" stroke="#aaa">
                <circle cx="18" cy="5" r="2" />
                <circle cx="18" cy="73" r="2" />
                <path d="M3 39h17" stroke="#ccc" />
                <circle cx="10" cy="21" r="6" stroke="#9db2cc" />
                <rect x="7" y="18" width="6" height="6" rx="1" stroke="#8da4c1" />
              </g>
              <path d="M9 34h4l-2 3zM9 62h4l-2 3z" fill="#999" />
              <path d="M6 45h8v7H6z" fill="#a9cf9b" />
              <circle cx="13" cy="53" r="2" fill="#fff" stroke="#8f9aa5" />
              <path d="M15 55l2 2" stroke="#8f9aa5" />
              <text x="13" y="29">2D</text>
            </svg>
          </div>
          <div class="watermark">J-L C</div>

          <div class="vscroll">
            <svg viewBox="0 0 8 8"><path d="M1 5l3-3 3 3" /></svg>
            <div class="thumb-v"></div>
            <svg viewBox="0 0 8 8"><path d="M1 3l3 3 3-3" /></svg>
          </div>
        </div>

        <div class="viewbar">
          <span>1 : 50</span>
          <svg
            v-for="name in viewIcons"
            :key="name"
            class="small"
            viewBox="0 0 12 12"
            v-html="smallIcons[name]"
          ></svg>
          <svg class="arrow" viewBox="0 0 8 8"><path d="M5 1 2 4l3 3" /></svg>
          <div class="track"><div class="thumb-h"></div></div>
          <svg class="arrow" viewBox="0 0 8 8"><path d="M3 1l3 3-3 3" /></svg>
          <svg class="grip" viewBox="0 0 8 8"><path d="M6 2h1M4 4h1M6 4h1M2 6h1M4 6h1M6 6h1" /></svg>
        </div>
      </section>
    </main>

    <footer class="status">
      <p>
        Clic maintenu et déplacement de souris pour un panoramique. Touche Ctrl: zoom – Touche Maj:
        rotation.
      </p>
      <svg class="small" viewBox="0 0 12 12" v-html="smallIcons.workset"></svg>
      <div class="combo">
        <select aria-label="Sous-projet"><option></option></select>
        <svg viewBox="0 0 8 8"><path d="M1 3l3 3 3-3" /></svg>
      </div>
      <div class="requests">
        <svg class="small" viewBox="0 0 12 12" v-html="smallIcons.requests"></svg>
        <span>:0</span>
      </div>
      <div class="variants">
        <svg class="small" viewBox="0 0 12 12" v-html="smallIcons.options"></svg>
        <svg class="small" viewBox="0 0 12 12" v-html="smallIcons.mainmodel"></svg>
      </div>
      <div class="combo muted">
        <select aria-label="Variante"><option>Modèle de base</option></select>
        <svg viewBox="0 0 8 8"><path d="M1 3l3 3 3-3" /></svg>
      </div>
      <div class="selection">
        <svg
          v-for="name in selectionIcons"
          :key="name"
          class="small"
          viewBox="0 0 12 12"
          v-html="smallIcons[name]"
        ></svg>
      </div>
      <div class="filter">
        <svg class="small" viewBox="0 0 12 12" v-html="smallIcons.filter"></svg>
        <span>:0</span>
      </div>
    </footer>
  </div>
</template>

<style>
body {
  margin: 0;
  background: #000;
}
</style>

<style scoped>
.app {
  display: flex;
  flex-direction: column;
  box-sizing: border-box;
  height: 100vh;
  padding: 19px 0;
  background: #000;
  color: #3a3a3a;
  font: 8px/10px Roboto, "Liberation Sans", sans-serif;
}

button,
input,
select {
  margin: 0;
  padding: 0;
  border: 0;
  border-radius: 0;
  background: none;
  color: inherit;
  font: inherit;
}

h2,
h3,
p,
ul {
  margin: 0;
  padding: 0;
  font: inherit;
  list-style: none;
}

svg {
  display: block;
  flex: none;
  width: 8px;
  height: 8px;
  fill: none;
  stroke: none;
}

svg.big {
  width: 20px;
  height: 20px;
}

svg.small {
  width: 12px;
  height: 12px;
}

.caret {
  display: inline-block;
  width: 4px;
  height: 2px;
  background: #333;
  clip-path: polygon(0 0, 100% 0, 50% 100%);
}

.caret.wide {
  width: 6px;
  height: 3px;
}

/* menu */
.menu {
  display: flex;
  flex: none;
  gap: 1px;
  height: 15px;
  background: #c9c9c9;
  box-shadow: inset 1px 0 #8d2b3a;
}

.menu button {
  padding: 1px 6px 0;
  white-space: nowrap;
}

.menu .file {
  width: 34px;
  margin-left: 1px;
  padding: 1px 0 0;
  background: #2a7aa9;
  color: #fff;
}

.menu .active {
  background: #ececea;
}

.menu .toggle {
  margin-left: 7px;
}

.menu .toggle svg {
  width: 18px;
}

/* ribbon */
.ribbon {
  display: flex;
  flex: none;
  height: 63px;
  border-bottom: 1px solid #dadad8;
  background: #ececea;
  box-sizing: border-box;
}

.panel {
  display: flex;
  flex-direction: column;
  flex: none;
  padding: 2px 2px 0 1px;
  border-right: 1px solid #dcdcda;
}

.panel:last-child {
  flex: 1;
}

.panel.select {
  width: 60px;
  padding: 2px 0 0;
}

.select .tools {
  justify-content: center;
}

.tools {
  display: flex;
  height: 48px;
}

.panel h2 {
  padding-top: 1px;
  line-height: 12px;
  text-align: center;
  white-space: nowrap;
}

.panel h2 .caret {
  margin-left: 3px;
  vertical-align: 1px;
}

.tool {
  position: relative;
  display: flex;
  flex-direction: column;
  flex: none;
  align-items: center;
  padding-top: 1px;
  white-space: nowrap;
}

.tool .big {
  margin-bottom: 4px;
}

.tool .caret {
  margin-top: 2px;
}

.tool .beside {
  position: absolute;
  right: 1px;
  bottom: 10px;
}

.modify {
  width: 34px;
  border: 1px solid #7fb0d6;
  background: #b4d4ee;
}

.off {
  color: #aaa;
}

.stack {
  display: flex;
  flex-direction: column;
  justify-content: center;
  gap: 4px;
  padding: 0 3px 0 6px;
}

.stack:first-child {
  padding-left: 3px;
}

.stack button {
  display: flex;
  gap: 2px;
  align-items: center;
  height: 12px;
  white-space: nowrap;
}

.options {
  flex: none;
  height: 18px;
  background: #ececea;
}

/* workspace */
.workspace {
  display: grid;
  flex: 1;
  grid-template-columns: 168px 1fr;
  min-height: 0;
}

.sidebar {
  display: flex;
  flex-direction: column;
  min-width: 0;
  min-height: 0;
  border-right: 1px solid #c4c4c4;
  background: #fff;
}

.heading {
  display: flex;
  align-items: center;
  justify-content: space-between;
  padding: 1px 2px 0;
  background: #f2f2f2;
  box-sizing: border-box;
}

.heading h3 {
  white-space: nowrap;
}

.close svg,
.documents .x {
  stroke: #222;
  stroke-width: 1.5;
}

.properties {
  flex: none;
  background: #f0f0f0;
}

.properties .heading {
  height: 16px;
}

.type {
  display: flex;
  gap: 3px;
  align-items: center;
  width: 100%;
  height: 47px;
  padding: 0 2px;
  border-bottom: 1px solid #d8d8d8;
  text-align: left;
}

.type .caret {
  margin-left: auto;
}

.thumb {
  display: flex;
  align-items: center;
  justify-content: center;
  width: 42px;
  height: 42px;
  border: 1px solid #dedede;
  background: #f4f4f4;
}

.thumb svg {
  width: 24px;
  height: 24px;
}

.instance {
  display: flex;
  gap: 4px;
  align-items: center;
  height: 17px;
  padding-left: 1px;
}

.instance button {
  display: flex;
  gap: 2px;
  align-items: center;
  white-space: nowrap;
}

.combo {
  display: flex;
  align-items: center;
  box-sizing: border-box;
  background: #fff;
}

.combo select {
  flex: 1;
  min-width: 0;
  height: 100%;
  appearance: none;
}

.combo svg,
.vscroll svg,
.hscroll svg,
.arrow,
.grip,
.group svg {
  stroke: #444;
}

.instance .combo {
  width: 86px;
  height: 15px;
  padding: 0 0 0 2px;
  border: 1px solid #b5b5b5;
  background: #e3e3e3;
}

.parameters {
  display: flex;
  height: 187px;
  overflow: hidden;
}

.scrolled {
  flex: 1;
  min-width: 0;
}

.group {
  display: flex;
  align-items: center;
  justify-content: space-between;
  height: 12px;
  padding: 0 2px;
  background: #cfcfcf;
}

table {
  width: 100%;
  border-collapse: collapse;
  table-layout: fixed;
  background: #fff;
}

th,
td {
  box-sizing: border-box;
  height: 12px;
  padding: 0 1px;
  border-right: 1px dashed #c6c6c6;
  border-bottom: 1px dashed #c6c6c6;
  font-weight: 400;
  text-align: left;
  white-space: nowrap;
}

th {
  width: 74px;
  padding: 0 0 0 6px;
}

td.link {
  width: 9px;
}

td input {
  display: block;
  box-sizing: border-box;
  width: 100%;
  height: 11px;
  padding-left: 2px;
  border: 1px solid #444;
}

td button {
  display: block;
  width: 100%;
  height: 11px;
  border: 1px solid #aaa;
  background: #dedede;
  line-height: 9px;
}

.off th,
.off td {
  color: #999;
}

.vscroll {
  display: flex;
  flex-direction: column;
  flex: none;
  align-items: center;
  width: 10px;
  padding: 2px 0;
  background: #f0f0f0;
}

.vscroll svg:last-child {
  margin-top: auto;
}

.parameters .vscroll {
  width: 12px;
}

.thumb-v {
  width: 10px;
  height: 58px;
  background: #cacaca;
}

.help {
  display: flex;
  align-items: center;
  justify-content: space-between;
  height: 17px;
  padding: 0 3px 0 2px;
}

.help a {
  color: #2c76b4;
}

.help button {
  width: 48px;
  height: 14px;
  background: #cccccc;
  color: #999;
}

.browser {
  display: flex;
  flex: 1;
  flex-direction: column;
  min-height: 0;
  border-top: 3px solid #e4e4e4;
}

.browser .heading {
  height: 13px;
}

.browser ul {
  flex: 1;
  overflow: hidden;
}

.browser li {
  display: flex;
  align-items: center;
  height: 12px;
  white-space: nowrap;
}

.browser li span {
  margin-left: 2px;
  padding: 0 2px;
}

.browser .active {
  background: #dcdcdc;
  color: #111;
  font-weight: 700;
}

.cell {
  display: flex;
  flex: none;
  align-items: center;
  justify-content: center;
  width: 14px;
  height: 12px;
  background: linear-gradient(#d2d2d2, #d2d2d2) 6px 0 / 1px 100% no-repeat;
}

.cell:first-child {
  width: 13px;
}

.cell svg {
  width: 7px;
  height: 7px;
}

.cell.plus,
.cell.minus,
.cell.tick {
  background:
    linear-gradient(#d2d2d2, #d2d2d2) 6px 0 / 1px 100% no-repeat,
    linear-gradient(#d2d2d2, #d2d2d2) 6px 6px / 8px 1px no-repeat;
}

.browser .small {
  margin-left: 1px;
}

.browser .small + span {
  margin-left: 1px;
}

.hscroll {
  display: flex;
  align-items: center;
  height: 12px;
  padding: 0 2px;
  background: #f0f0f0;
}

.thumb-h {
  height: 10px;
  background: #cacaca;
}

.hscroll .thumb-h {
  width: 132px;
  margin: 0 auto 0 2px;
}

/* drawing area */
.view {
  display: flex;
  flex-direction: column;
  min-width: 0;
  min-height: 0;
  background: #fff;
}

.documents {
  display: flex;
  flex: none;
  align-items: center;
  height: 16px;
  padding-right: 2px;
  background: #c9c9c9;
}

.documents button {
  display: flex;
  gap: 4px;
  align-items: center;
  height: 100%;
  padding: 1px 15px 0 4px;
  white-space: nowrap;
  box-sizing: border-box;
}

.documents .current {
  padding: 1px 3px 0 2px;
  background: #fff;
  font-weight: 700;
}

.documents .x {
  margin-left: 4px;
}

.documents > .caret {
  margin-left: auto;
}

.canvas {
  position: relative;
  display: flex;
  flex: 1;
  min-height: 0;
}

.drawing {
  flex: 1;
  width: auto;
  min-width: 0;
  height: 100%;
  margin-left: 2px;
}

.room,
.entry {
  fill: #222;
  font: 8px "Noto Sans", sans-serif;
}

.area {
  fill: #1c1c8c;
  font: 6px "DejaVu Sans", sans-serif;
}

.title {
  fill: #000;
  font: 700 9px "Open Sans", sans-serif;
}

.entry {
  font-family: "Open Sans", sans-serif;
}

.canvas .thumb-v {
  height: 11px;
  margin-top: 256px;
}

.navigation {
  position: absolute;
  top: 0;
  right: 11px;
}

.navigation svg {
  width: 24px;
  height: 78px;
}

.navigation text {
  fill: #8da4c1;
  font: 6px "Liberation Sans", sans-serif;
}

.watermark {
  position: absolute;
  right: 7px;
  bottom: -7px;
  color: #4a7ebb;
  font: 52px/52px "Liberation Sans", sans-serif;
  white-space: nowrap;
}

.viewbar {
  display: flex;
  flex: none;
  gap: 2px;
  align-items: center;
  height: 12px;
  margin-left: 2px;
  padding-right: 1px;
  background: #ededed;
}

.viewbar > span {
  width: 32px;
  padding-left: 18px;
}

.track {
  display: flex;
  flex: 1;
  justify-content: center;
}

.track .thumb-h {
  width: 11px;
}

/* status bar */
.status {
  display: flex;
  flex: none;
  align-items: center;
  height: 16px;
  padding-top: 1px;
  border-top: 1px solid #dedede;
  background: #c9c9c9;
  box-shadow: inset 1px 0 #8d2b3a;
  white-space: nowrap;
  box-sizing: border-box;
}

.status p {
  width: 549px;
  padding-left: 1px;
}

.status .combo {
  width: 136px;
  height: 12px;
  margin-left: 4px;
  padding: 0 1px 0 2px;
}

.status .combo svg {
  stroke: #999;
}

.muted {
  color: #888;
}

.requests,
.variants,
.selection,
.filter {
  display: flex;
  align-items: center;
}

.requests {
  gap: 1px;
  width: 32px;
  padding-left: 8px;
}

.variants {
  gap: 5px;
}

.selection {
  gap: 5px;
  margin-left: auto;
  padding-right: 3px;
}

.filter {
  padding-right: 49px;
}
</style>
